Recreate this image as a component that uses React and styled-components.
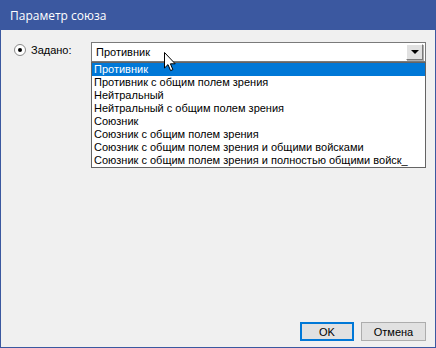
import React from "react";
import styled, { createGlobalStyle } from "styled-components";

const GlobalStyle = createGlobalStyle`
  html, body {
    margin: 0;
    padding: 0;
    background: #f0f0f0;
  }
  * {
    box-sizing: border-box;
  }
`;

const OPTIONS = [
  "Противник",
  "Противник с общим полем зрения",
  "Нейтральный",
  "Нейтральный с общим полем зрения",
  "Союзник",
  "Союзник с общим полем зрения",
  "Союзник с общим полем зрения и общими войсками",
  "Союзник с общим полем зрения и полностью общими войск_",
];

const Window = styled.div`
  width: 436px;
  height: 348px;
  display: flex;
  flex-direction: column;
  border: 1px solid #3b58a0;
  border-top: none;
  background: #f0f0f0;
  font-family: "Liberation Sans", Arial, sans-serif;
  font-size: 11px;
  color: #000;
`;

const TitleBar = styled.div`
  height: 30px;
  margin: 0 -1px;
  padding-left: 10px;
  display: flex;
  align-items: center;
  background: #3b58a0;
  color: #fff;
  font-family: "Open Sans", "Noto Sans", sans-serif;
  font-size: 12px;
`;

const Body = styled.div`
  flex: 1;
  display: flex;
  flex-direction: column;
  padding: 11px 9px 6px 13px;
`;

const Row = styled.div`
  display: flex;
  align-items: flex-start;
`;

const RadioLabel = styled.label`
  width: 77px;
  display: flex;
  align-items: center;
  gap: 5px;
  padding-top: 3px;
`;

const Radio = styled.span`
  width: 12px;
  height: 12px;
  border-radius: 50%;
  border: 1px solid #8a8a8a;
  background: #fff;
  display: flex;
  align-items: center;
  justify-content: center;
  &::after {
    content: "";
    width: 4px;
    height: 4px;
    border-radius: 50%;
    background: #000;
  }
`;

const ComboWrap = styled.div`
  position: relative;
  flex: 1;
  margin-top: 1px;
`;

const Combo = styled.div`
  height: 20px;
  border: 1px solid #7a7a7a;
  background: #fff;
  display: flex;
  align-items: center;
  padding: 1px 2px 1px 4px;
`;

const ComboText = styled.span`
  flex: 1;
`;

const ArrowButton = styled.span`
  width: 17px;
  height: 16px;
  background: #e1e1e1;
  border: 1px solid;
  border-color: #fff #7a7a7a #7a7a7a #fff;
  box-shadow: 1px 1px 0 #adadad;
  display: flex;
  align-items: center;
  justify-content: center;
  &::after {
    content: "";
    border-left: 4px solid transparent;
    border-right: 4px solid transparent;
    border-top: 4px solid #000;
  }
`;

const List = styled.ul`
  position: absolute;
  top: 20px;
  left: 0;
  right: 0;
  margin: 0;
  padding: 0;
  list-style: none;
  background: #fff;
  border: 1px solid #646464;
  z-index: 2;
`;

const Item = styled.li`
  height: 13px;
  line-height: 13px;
  padding-left: 2px;
  white-space: nowrap;
  background: ${(p) => (p.$active ? "#0078d7" : "transparent")};
  color: ${(p) => (p.$active ? "#fff" : "#000")};
`;

const Cursor = styled.svg`
  position: absolute;
  left: 73px;
  top: 10px;
  z-index: 3;
`;

const Footer = styled.div`
  margin-top: auto;
  display: flex;
  justify-content: flex-end;
  gap: 7px;
`;

const Button = styled.button`
  width: ${(p) => p.$w}px;
  height: 19px;
  padding: 0;
  font-family: inherit;
  font-size: 11px;
  color: #000;
  background: #e1e1e1;
  border: 1px solid ${(p) => (p.$default ? "#0078d7" : "#adadad")};
  box-shadow: ${(p) => (p.$default ? "inset 0 0 0 1px #0078d7" : "none")};
`;

function Pointer() {
  return (
    <Cursor width="13" height="20" viewBox="0 0 13 20">
      <path
        d="M0.5 0.5 L0.5 16 L4 12.6 L6.6 18.6 L8.9 17.6 L6.4 11.8 L11.2 11.8 Z"
        fill="#fff"
        stroke="#000"
        strokeWidth="1"
        strokeLinejoin="miter"
      />
    </Cursor>
  );
}

export default function App() {
  return (
    <>
      <GlobalStyle />
      <Window>
        <TitleBar>Параметр союза</TitleBar>
        <Body>
          <Row>
            <RadioLabel>
              <Radio />
              Задано:
            </RadioLabel>
            <ComboWrap>
              <Combo>
                <ComboText>Противник</ComboText>
                <ArrowButton />
              </Combo>
              <List>
                {OPTIONS.map((o, i) => (
                  <Item key={o} $active={i === 0}>
                    {o}
                  </Item>
                ))}
              </List>
              <Pointer />
            </ComboWrap>
          </Row>
          <Footer>
            <Button $w={54} $default>
              OK
            </Button>
            <Button $w={65}>Отмена</Button>
          </Footer>
        </Body>
      </Window>
    </>
  );
}
